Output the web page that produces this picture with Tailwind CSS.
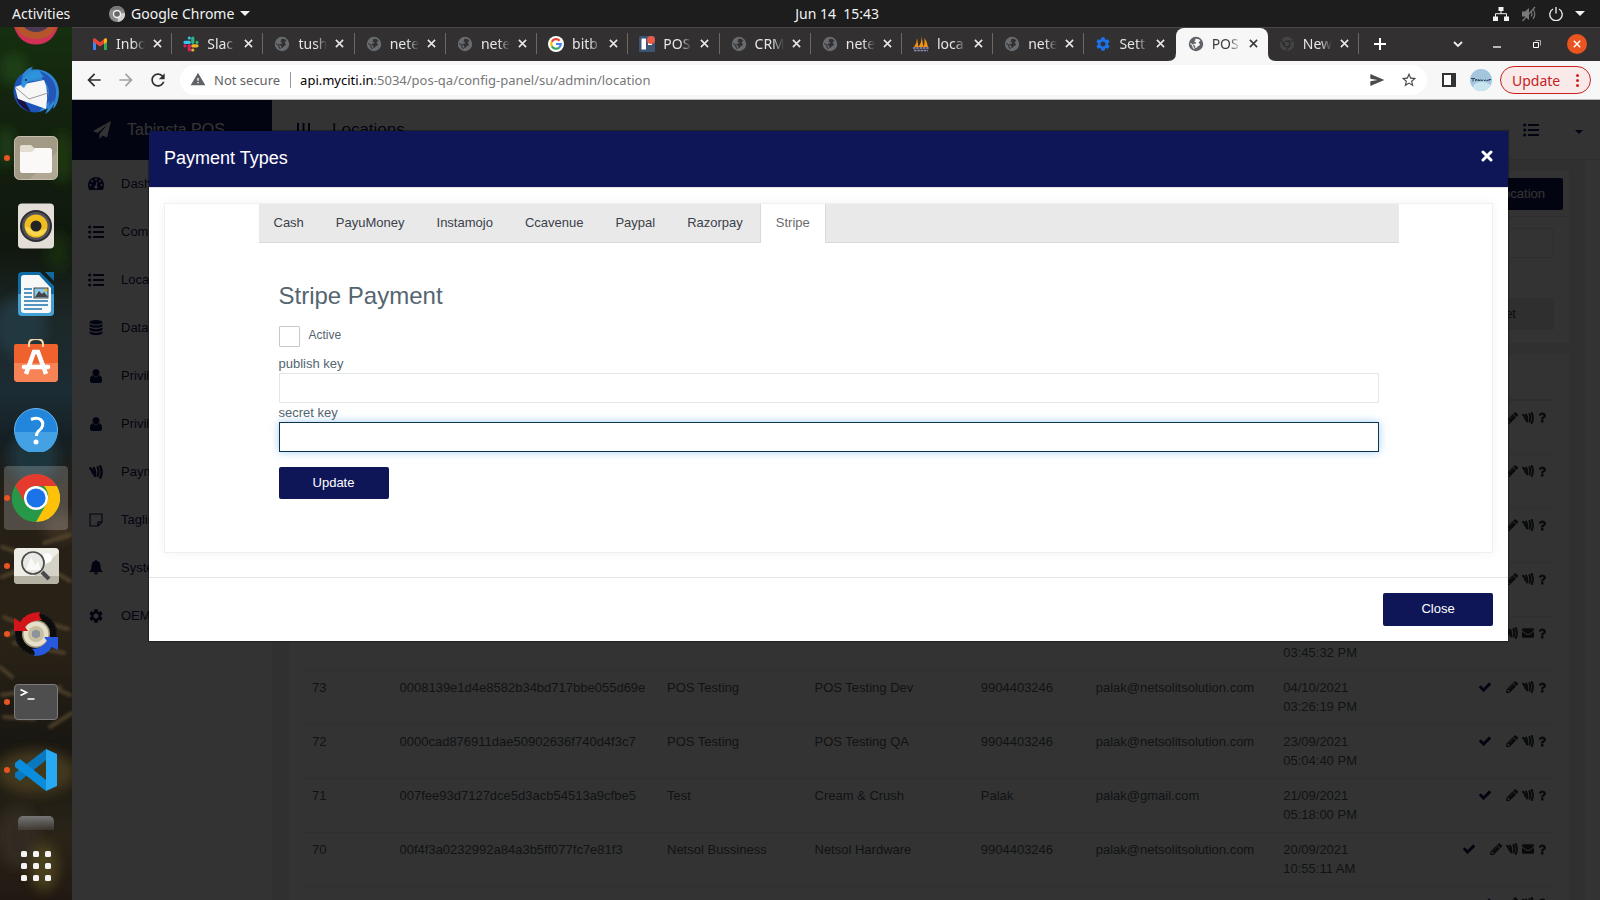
<!DOCTYPE html>
<html lang="en">
<head>
<meta charset="utf-8">
<meta name="viewport" content="width=device-width, initial-scale=1">
<title>Payment Types - Tabinsta POS</title>
<script src="https://cdn.jsdelivr.net/npm/@tailwindcss/browser@4"></script>
</head>
<body class="flex h-screen flex-col overflow-hidden bg-[#1d1d1d] font-['Liberation_Sans',Arial,sans-serif] text-[13px]">

<!-- Icon definitions -->
<svg class="hidden" aria-hidden="true">
  <symbol id="x" viewBox="0 0 10 10"><path d="M1 1l8 8M9 1l-8 8" fill="none" stroke="currentColor" stroke-width="1.8"/></symbol>
  <symbol id="globe" viewBox="0 0 16 16"><circle cx="8" cy="8" r="7.2" fill="currentColor"/><path d="M7 3c2-.8 4.500 0 5.500 2-1 .5-2 .8-1.800 1.800.2.700 1.300.500 1.200 1.600-.1 1.200-1.600 1.200-2.300 2.200-.6.9-1.100 1.800-2 1.400-.8-.4-.1-1.400-.4-2.100-.4-.9-1.900-.4-2-1.400 0-.9 1.300-.7 2-.8.9-.1 1.200-.6.8-1.200-.4-.6-1.500-.2-1.500-1.100 0-.8 1-.7 1.100-1.300z" class="fill-[#323031]"/><path d="M2.200 7.500q2.300.7 2.600 2.600t1.700 2.700" fill="none" class="stroke-[#323031]" stroke-width="1.200"/></symbol>
  <symbol id="list" viewBox="0 0 16 14"><g fill="currentColor"><circle cx="1.700" cy="2" r="1.600"/><circle cx="1.700" cy="7" r="1.600"/><circle cx="1.700" cy="12" r="1.600"/><path d="M5 .9h11v2.200H5zM5 5.900h11v2.200H5zM5 10.900h11v2.200H5z"/></g></symbol>
  <symbol id="user" viewBox="0 0 14 14"><g fill="currentColor"><circle cx="7" cy="3.700" r="3.500"/><path d="M3.500 6.200C1.500 6.800.8 9 .9 11.700c0 1.400.9 2.200 2.100 2.200h8c1.200 0 2.100-.8 2.100-2.200.1-2.700-.6-4.900-2.600-5.500-1.800 1.900-5.200 1.900-7 0z"/></g></symbol>
  <symbol id="wave" viewBox="0 0 14 14"><g fill="none" stroke="currentColor" stroke-linecap="round"><path d="M1.300 3.300c1.500.8 1.800 2.200 3 5.200" stroke-width="2.600"/><path d="M4.800 3c1.400 2.500 1.800 4.800 1 8" stroke-width="2.400"/><path d="M8.600 2.200c1.200 2.600 1.200 6 0 9" stroke-width="2.200"/><path d="M11.300 1.200c1.700 3.600 1.700 8 0 11.600" stroke-width="2.400"/></g></symbol>
  <symbol id="check" viewBox="0 0 1792 1792"><path fill="currentColor" d="M1671 566q0 40-28 68l-724 724-136 136q-28 28-68 28t-68-28l-136-136-362-362q-28-28-28-68t28-68l136-136q28-28 68-28t68 28l294 295 656-657q28-28 68-28t68 28l136 136q28 28 28 68z"/></symbol>
  <symbol id="pencil" viewBox="100 128 1536 1536"><path fill="currentColor" d="M491 1536l91-91-235-235-91 91v107h128v128h107zm523-928q0-22-22-22-10 0-17 7l-542 542q-7 7-7 17 0 22 22 22 10 0 17-7l542-542q7-7 7-17zm-54-192l416 416-832 832h-416v-416zm683 96q0 53-37 90l-166 166-416-416 166-165q36-38 90-38 53 0 91 38l235 234q37 39 37 91z"/></symbol>
  <symbol id="mail" viewBox="0 128 1792 1664"><path fill="currentColor" d="M1792 710v794q0 66-47 113t-113 47h-1472q-66 0-113-47t-47-113v-794q44 49 101 87 362 246 497 345 57 42 92.500 65.500t94.500 48 110 24.500h2q51 0 110-24.500t94.500-48 92.500-65.500q170-123 498-345 57-39 100-87zm0-294q0 79-49 151t-122 123q-376 261-468 325-10 7-42.500 31t-54 38.500-52 32.500-57.500 27-50 9h-2q-23 0-50-9t-57.500-27-52-32.500-54-38.500-42.500-31q-91-64-262-182.500t-205-142.500q-62-42-117-115.500t-55-136.500q0-78 41.500-130t118.500-52h1472q65 0 112.500 47t47.500 113z"/></symbol>
  <symbol id="help" viewBox="384 256 1024 1280"><path fill="currentColor" d="M1088 1256v240q0 16-12 28t-28 12h-240q-16 0-28-12t-12-28v-240q0-16 12-28t28-12h240q16 0 28 12t12 28zm316-600q0 54-15.500 101t-35 76.500-55 59.500-57.500 43.500-61 35.500q-41 23-68.500 65t-27.500 67q0 17-12 32.500t-28 15.500h-240q-15 0-25.500-18.500t-10.500-37.500v-45q0-83 65-156.500t143-108.500q59-27 84-56t25-76q0-42-46.500-74t-107.500-32q-65 0-108 29-35 25-107 115-13 16-31 16-12 0-25-8l-164-125q-13-10-15.500-25t5.500-28q160-266 464-266 80 0 161 31t146 83 106 127.500 41 158.500z"/></symbol>
  <symbol id="gear" viewBox="2 2 20 20"><path fill="currentColor" d="M19.140 12.940c.04-.3.060-.61.060-.94 0-.32-.02-.64-.07-.94l2.030-1.580c.18-.14.23-.41.120-.61l-1.920-3.320c-.12-.22-.37-.29-.59-.22l-2.390.96c-.5-.38-1.030-.7-1.620-.94l-.36-2.540c-.04-.24-.24-.41-.48-.41h-3.840c-.24 0-.43.17-.47.41l-.36 2.540c-.59.24-1.130.57-1.620.94l-2.390-.96c-.22-.08-.47 0-.59.22L2.740 8.870c-.12.21-.08.47.12.61l2.030 1.580c-.05.3-.09.63-.09.94s.02.64.07.94l-2.030 1.580c-.18.14-.23.41-.12.61l1.920 3.320c.12.22.37.29.59.22l2.390-.96c.5.38 1.030.7 1.620.94l.36 2.540c.05.24.24.41.48.41h3.840c.24 0 .44-.17.47-.41l.36-2.540c.59-.24 1.130-.56 1.620-.94l2.390.96c.22.08.47 0 .59-.22l1.920-3.320c.12-.22.07-.47-.12-.61l-2.010-1.580zM12 15.600c-1.980 0-3.600-1.620-3.600-3.600s1.620-3.600 3.600-3.600 3.600 1.620 3.600 3.600-1.620 3.600-3.600 3.600z"/></symbol>
</svg>

<!-- System panel -->
<header class="flex h-[27px] shrink-0 items-center bg-[#1d1d1d] font-['Noto_Sans',sans-serif] text-[14px] leading-5 text-[#f2f2f2]">
  <div class="flex w-[49.7%] items-center pl-3">
    <button class="w-[97px] text-left">Activities</button>
    <button class="flex items-center gap-[6px]">
      <svg class="size-4" viewBox="0 0 16 16"><circle cx="8" cy="8" r="8" fill="#8a8a8a"/><path d="M8 8l8-1a8 8 0 0 1-7 9z" fill="#d0d0d0"/><path d="M1 4a8 8 0 0 1 14 0H8z" fill="#777"/><circle cx="8" cy="8" r="4.200" fill="#f0f0f0"/><circle cx="8" cy="8" r="2.800" fill="#666"/></svg>
      <span>Google Chrome</span>
      <svg class="h-[5px] w-[10px]" viewBox="0 0 10 5"><path d="M0 0h10L5 5z" fill="#f2f2f2"/></svg>
    </button>
  </div>
  <time class="whitespace-pre">Jun 14  15:43</time>
  <div class="ml-auto flex items-center gap-3 pr-[15px]">
    <svg class="h-[14px] w-4" viewBox="0 0 16 14"><path d="M5.500 0h5v4h-5zM0 9.500h5V14H0zM11 9.500h5V14h-5z" fill="#f2f2f2"/><path d="M8 4v2.700M2.500 10V6.700h11V10" fill="none" stroke="#f2f2f2"/></svg>
    <svg class="size-4" viewBox="0 0 16 16"><path d="M1 5.500h3L8 2v12l-4-3.500H1z" fill="#7a7a7a"/><path d="M10 5.500q2 2.500 0 5M12 3q3.500 5 0 10M1.500 15L14 1" fill="none" stroke="#7a7a7a" stroke-width="1.200"/></svg>
    <svg class="size-[14px]" viewBox="0 0 14 14"><path d="M4 2a6.200 6.200 0 1 0 6 0M7 0v6.500" fill="none" stroke="#f2f2f2" stroke-width="1.300"/></svg>
    <svg class="h-[5px] w-[10px]" viewBox="0 0 10 5"><path d="M0 0h10L5 5z" fill="#f2f2f2"/></svg>
  </div>
</header>

<div class="flex min-h-0 flex-1">

  <!-- Dock -->
  <nav aria-label="Dock" class="relative flex w-[72px] shrink-0 flex-col overflow-hidden bg-[#151510]">
    <svg class="absolute inset-0 size-full" viewBox="0 0 72 873" preserveAspectRatio="none" aria-hidden="true">
      <defs>
        <linearGradient id="dk" x2="0" y2="1"><stop offset="0" stop-color="#16300f"/><stop offset=".08" stop-color="#14240f"/><stop offset=".25" stop-color="#10170e"/><stop offset=".34" stop-color="#1d2829"/><stop offset=".42" stop-color="#1c2c34"/><stop offset=".47" stop-color="#152024"/><stop offset=".53" stop-color="#241e16"/><stop offset=".7" stop-color="#2a2216"/><stop offset=".82" stop-color="#191712"/><stop offset=".93" stop-color="#2a2418"/><stop offset="1" stop-color="#211812"/></linearGradient>
        <filter id="bl" x="-50%" y="-50%" width="200%" height="200%"><feGaussianBlur stdDeviation="6"/></filter>
        <filter id="bs"><feGaussianBlur stdDeviation="1.500"/></filter>
      </defs>
      <rect width="72" height="873" fill="url(#dk)"/>
      <g filter="url(#bl)"><ellipse cx="14" cy="42" rx="14" ry="16" fill="#1d4012"/><ellipse cx="62" cy="130" rx="12" ry="26" fill="#1b3410"/><ellipse cx="6" cy="120" rx="10" ry="20" fill="#1c3a12"/><ellipse cx="58" cy="225" rx="12" ry="20" fill="#17290f"/><ellipse cx="20" cy="300" rx="26" ry="30" fill="#233740"/><ellipse cx="34" cy="430" rx="24" ry="26" fill="#1e343c"/><ellipse cx="60" cy="500" rx="16" ry="14" fill="#3d3022"/><ellipse cx="36" cy="745" rx="40" ry="22" fill="#43371e"/><ellipse cx="18" cy="810" rx="20" ry="30" fill="#332c20"/><ellipse cx="44" cy="840" rx="14" ry="24" fill="#4a3f1e"/></g>
      <g filter="url(#bs)" fill="none" stroke="#5e4e33" stroke-width="4" stroke-linecap="round" opacity=".7"><path d="M2 520l18 6M44 516l26-8M2 550l30-12M50 542l20 12M4 590l22 10M40 594l28 8M8 608l24-12M0 640l12 10M52 660l18 8M2 668l26-4M30 674l30-14M4 690l30 2M50 700l22-14M14 616l50 10"/></g>
    </svg>

    <div class="relative flex h-[29px] justify-center">
      <svg class="h-[18px] w-[44px]" viewBox="0 0 44 18"><path d="M0 0h44q-6 17.500-22 17.500T0 0z" fill="#d02f58"/><path d="M2 0h40q-5 12-20 12T2 0z" fill="#b4552c"/><path d="M10 0h24q-5 5-12 5T10 0z" fill="#4c3a55"/></svg>
    </div>
    <a href="#" aria-label="Thunderbird" class="relative flex h-[68px] items-center justify-center">
      <svg class="size-[48px]" viewBox="0 0 48 48"><circle cx="23" cy="25" r="21.500" fill="#1c54b8"/><path d="M11 8Q16 1 21 1l-2 3C34 1 48 12 47 28q-1 11-6 15l1-5q-3 7-9 10l3-6-9 4 8-10Q38 22 30 14L9 17z" fill="#2f86d2"/><path d="M30 13q12 10 3 26l5-4-1 5 5-6 0 4Q50 14 28 5z" fill="#2456b8"/><path d="M12 18l20-4q5 10 2 29L6 33 3 21z" fill="#f6f6f6"/><path d="M3 21l14 12 19-6" fill="none" stroke="#9a9a9a"/><path d="M4 32q4 10 15 14l-6-10z" fill="#1b1040"/><path d="M9 20Q12 5 27 5l5 6-15 3-5 8z" fill="#2c94dd"/><circle cx="14" cy="14" r="1" fill="#123"/></svg>
    </a>
    <a href="#" aria-label="Files" class="relative flex h-[68px] items-center justify-center">
      <span class="absolute left-1 size-[6px] rounded-full bg-[#e95420]"></span>
      <svg class="size-[44px]" viewBox="0 0 44 44"><rect x=".5" y=".5" width="43" height="43" rx="5" fill="#a39a86" stroke="#c5beae"/><path d="M43 16v22q0 5-5 5H16z" fill="#b0a894"/><rect x="6" y="12" width="32" height="25" rx="2.500" fill="#faf9f8"/><path d="M6 16V11q0-2 2-2h9l4 4-3 3z" fill="#e2dfd2"/></svg>
    </a>
    <a href="#" aria-label="Rhythmbox" class="relative flex h-[68px] items-center justify-center">
      <svg class="h-[46px] w-[36px]" viewBox="0 0 36 46"><rect width="36" height="45" y="0.500" rx="4" fill="#e4dfd6"/><circle cx="18" cy="23" r="16" fill="#2d2d33"/><circle cx="18" cy="23" r="14" fill="#52525a"/><circle cx="18" cy="23" r="11.500" fill="#f0bd1f"/><path d="M7 23a11.500 11.500 0 0 0 22 3q-11 4-22-3z" fill="#f8d84e"/><circle cx="18" cy="23" r="5.500" fill="#242424"/></svg>
    </a>
    <a href="#" aria-label="LibreOffice Writer" class="relative flex h-[68px] items-center justify-center">
      <svg class="h-[44px] w-[36px]" viewBox="0 0 36 44"><path d="M4 0h18l14 14v26q0 4-4 4H4q-4 0-4-4V4q0-4 4-4z" fill="#0f6ca6"/><path d="M0 22h36v18q0 4-4 4H4q-4 0-4-4z" fill="#43a0d3"/><path d="M27 0h9v9z" fill="#11699f"/><path d="M6 3h15l12 13v22q0 3-3 3H6q-3 0-3-3V6q0-3 3-3z" fill="#f8f8f8"/><path d="M6 17h8M6 21h8M6 25h8M6 29h24M6 33h24M6 37h18" stroke="#1a74ad" stroke-width="1.700"/><rect x="16" y="16" width="14" height="10" fill="#8cc9e8" stroke="#222" stroke-width=".8"/><path d="M17 25l4-6 3 3 2-2 4 5z" fill="#444"/><circle cx="28" cy="18" r="1.500" fill="#f0b400"/></svg>
    </a>
    <a href="#" aria-label="Ubuntu Software" class="relative flex h-[68px] items-center justify-center">
      <svg class="h-[46px] w-[44px]" viewBox="0 0 44 46"><path d="M0 7q0-2 2-2h40q2 0 2 2v32q0 4-4 4H4q-4 0-4-4z" fill="#f0622d"/><path d="M0 24h44v15q0 4-4 4H4q-4 0-4-4z" fill="#f58355"/><path d="M15 8V5q0-5 7-5t7 5v3" fill="none" stroke="#f6d6a8" stroke-width="2"/><path d="M12 35l8-22h4l8 22" fill="none" stroke="#fff" stroke-width="4.500"/><path d="M10 28h24" stroke="#fff" stroke-width="4.500" stroke-linecap="round"/></svg>
    </a>
    <a href="#" aria-label="Help" class="relative flex h-[68px] items-center justify-center">
      <svg class="size-[44px]" viewBox="0 0 44 44"><circle cx="22" cy="22" r="21.500" fill="#2286dc" stroke="#6ab5ec"/><path d="M.5 24h43a21.500 21.500 0 0 1-43 0z" fill="#44a2e4"/><path d="M17 11.500q6-2.500 9.500 0 4 3.500 1 8.500-1 1.500-3.500 3.500-1.500 1.500-1.500 4.500" fill="none" stroke="#fff" stroke-width="3"/><circle cx="22" cy="34" r="2.500" fill="#fff"/></svg>
    </a>
    <a href="#" aria-label="Google Chrome" class="relative flex h-[68px] items-center justify-center">
      <span class="absolute inset-x-1 inset-y-[2px] rounded-[4px] bg-white/20"></span>
      <span class="absolute left-1 size-[6px] rounded-full bg-[#e95420]"></span>
      <svg class="relative size-[48px]" viewBox="0 0 48 48"><circle cx="24" cy="24" r="24" fill="#279847"/><path d="M3.200 12A24 24 0 0 1 44.800 12H24a12 12 0 0 0-10.400 18z" fill="#e53a2e"/><path d="M3.200 12l10.400 18L24 36 34.400 30 24 48A24 24 0 0 1 3.200 12z" fill="#279847"/><path d="M44.800 12A24 24 0 0 1 24 48l10.400-18Q39 20 32 12z" fill="#fdc10a"/><circle cx="24" cy="24" r="12" fill="#fff"/><circle cx="24" cy="24" r="9.600" fill="#1a73e8"/></svg>
    </a>
    <a href="#" aria-label="Image Viewer" class="relative flex h-[68px] items-center justify-center">
      <span class="absolute left-1 size-[6px] rounded-full bg-[#e95420]"></span>
      <svg class="h-[36px] w-[45px]" viewBox="0 0 45 36"><rect width="45" height="36" rx="4" fill="#eeede6"/><path d="M20 28L45 4v24z" fill="#d4d1c6"/><path d="M0 28h45v4q0 4-4 4H4q-4 0-4-4z" fill="#b5b1a3"/><circle cx="33" cy="10" r="5" fill="#fff"/><circle cx="19" cy="15" r="11" fill="#e8e8e4" stroke="#4c4c4c" stroke-width="1.700"/><path d="M12 22l5-13 4 8 3-4 3 9z" fill="#f9f9f6"/><path d="M28 24l7 7" stroke="#4a4a4a" stroke-width="4"/></svg>
    </a>
    <a href="#" aria-label="Sync" class="relative flex h-[68px] items-center justify-center">
      <span class="absolute left-1 size-[6px] rounded-full bg-[#e95420]"></span>
      <svg class="size-[46px]" viewBox="0 0 46 46"><circle cx="23" cy="23" r="21" fill="#0c0c0c" stroke="#222" stroke-width="2" stroke-dasharray="2 2"/><circle cx="23" cy="23" r="14" fill="#9d937a"/><circle cx="23" cy="23" r="12.500" fill="#e6dfc9"/><circle cx="23" cy="23" r="8" fill="#c8bea0"/><path d="M23 18.500l4 2v5l-4 2-4-2v-5z" fill="#8b949c"/><path d="M27 1Q13 1 7 11L1 7v13h14l-3-4Q17 9 29 9q-4-4-2-8z" fill="#d3141b"/><path d="M21 45q13 0 18-9l6 3V26H31l3 4q-4 7-15 8 4 3 2 7z" fill="#2659de"/></svg>
    </a>
    <a href="#" aria-label="Terminal" class="relative flex h-[68px] items-center justify-center">
      <span class="absolute left-1 size-[6px] rounded-full bg-[#e95420]"></span>
      <svg class="h-[36px] w-[44px]" viewBox="0 0 44 36"><rect x=".5" y=".5" width="43" height="35" rx="3.500" fill="#4e4e4e" stroke="#7c7c7c"/><path d="M6.500 5.500l6 3-6 3" fill="none" stroke="#fff" stroke-width="1.700"/><path d="M13.500 15h7" stroke="#fff" stroke-width="1.500"/></svg>
    </a>
    <a href="#" aria-label="Visual Studio Code" class="relative flex h-[68px] items-center justify-center">
      <span class="absolute left-1 size-[6px] rounded-full bg-[#e95420]"></span>
      <svg class="size-[42px]" viewBox="0 0 42 42"><path d="M31 0v11L5 32 0 28v-4z" fill="#0a78be"/><path d="M31 42V31L5 10l-5 4v4z" fill="#0a8ddd"/><path d="M31 0l11 5v32l-11 5z" fill="#27a9f3"/></svg>
    </a>
    <div class="relative flex h-[26px] items-end justify-center">
      <span class="h-[14px] w-9 rounded-t-[5px] bg-gradient-to-b from-[#777] to-[#777]/20"></span>
    </div>
    <button aria-label="Show Applications" class="relative mx-auto mt-[21px]">
      <svg class="size-[30px]" viewBox="0 0 30 30"><g fill="#f4f4f4"><rect width="6" height="6" rx="1.500"/><rect x="12" width="6" height="6" rx="1.500"/><rect x="24" width="6" height="6" rx="1.500"/><rect y="12" width="6" height="6" rx="1.500"/><rect x="12" y="12" width="6" height="6" rx="1.500"/><rect x="24" y="12" width="6" height="6" rx="1.500"/><rect y="24" width="6" height="6" rx="1.500"/><rect x="12" y="24" width="6" height="6" rx="1.500"/><rect x="24" y="24" width="6" height="6" rx="1.500"/></g></svg>
    </button>
  </nav>

  <!-- Browser window -->
  <div class="flex min-w-0 flex-1 flex-col">

    <!-- Tab strip -->
    <div class="flex h-[34px] shrink-0 items-stretch border-t border-[#474546] bg-[#323031] pl-[9px] font-['Noto_Sans',sans-serif] text-[14px] leading-5 text-[#e6e6e6]">
      <div class="flex w-[1278px] items-stretch [&>div]:pb-[2px]">
        <div class="flex flex-1 items-center gap-2 pl-[11px]"><svg class="size-4 shrink-0" viewBox="0 0 16 16"><path d="M1 3.500h3V14H2q-1 0-1-1z" fill="#4285f4"/><path d="M12 3.500h3V13q0 1-1 1h-2z" fill="#34a853"/><path d="M1 4q0-2 2-1.700L8 6.300l5-4Q15 2 15 4v1.500l-7 5-7-5z" fill="#ea4335"/><path d="M12 3.200Q15 1 15 4v2l-3 2z" fill="#fbbc04"/></svg><span class="w-[29px] whitespace-nowrap [mask-image:linear-gradient(to_right,#000_60%,transparent)]">Inbo</span><button aria-label="Close tab" class="shrink-0"><svg class="size-[9px]"><use href="#x"/></svg></button><span class="ml-auto h-[21px] w-px bg-[#6a6869]"></span></div>
        <div class="flex flex-1 items-center gap-2 pl-[11px]"><svg class="size-4 shrink-0" viewBox="0 0 16 16"><g stroke-width="3.200" stroke-linecap="round"><path d="M6.300 2v0M2 6.300h4.300" stroke="#36c5f0"/><path d="M9.800 2v4.300M14 6.300v0" stroke="#2eb67d"/><path d="M9.800 9.800H14M9.800 14v0" stroke="#ecb22e"/><path d="M6.300 9.800V14M2 9.800v0" stroke="#e01e5a"/></g></svg><span class="w-[29px] whitespace-nowrap [mask-image:linear-gradient(to_right,#000_60%,transparent)]">Slac</span><button aria-label="Close tab" class="shrink-0"><svg class="size-[9px]"><use href="#x"/></svg></button><span class="ml-auto h-[21px] w-px bg-[#6a6869]"></span></div>
        <div class="flex flex-1 items-center gap-2 pl-[11px]"><svg class="size-4 shrink-0 text-[#686b70]"><use href="#globe"/></svg><span class="w-[29px] whitespace-nowrap [mask-image:linear-gradient(to_right,#000_60%,transparent)]">tush</span><button aria-label="Close tab" class="shrink-0"><svg class="size-[9px]"><use href="#x"/></svg></button><span class="ml-auto h-[21px] w-px bg-[#6a6869]"></span></div>
        <div class="flex flex-1 items-center gap-2 pl-[11px]"><svg class="size-4 shrink-0 text-[#686b70]"><use href="#globe"/></svg><span class="w-[29px] whitespace-nowrap [mask-image:linear-gradient(to_right,#000_60%,transparent)]">nete</span><button aria-label="Close tab" class="shrink-0"><svg class="size-[9px]"><use href="#x"/></svg></button><span class="ml-auto h-[21px] w-px bg-[#6a6869]"></span></div>
        <div class="flex flex-1 items-center gap-2 pl-[11px]"><svg class="size-4 shrink-0 text-[#686b70]"><use href="#globe"/></svg><span class="w-[29px] whitespace-nowrap [mask-image:linear-gradient(to_right,#000_60%,transparent)]">nete</span><button aria-label="Close tab" class="shrink-0"><svg class="size-[9px]"><use href="#x"/></svg></button><span class="ml-auto h-[21px] w-px bg-[#6a6869]"></span></div>
        <div class="flex flex-1 items-center gap-2 pl-[11px]"><svg class="size-4 shrink-0" viewBox="0 0 16 16"><circle cx="8" cy="8" r="8" fill="#fff"/><g fill="none" stroke-width="2.200"><path d="M11.600 4.700A4.800 4.800 0 0 0 3.800 5.700" stroke="#ea4335"/><path d="M3.800 5.700a4.800 4.800 0 0 0 0 4.600" stroke="#fbbc04"/><path d="M3.800 10.300a4.800 4.800 0 0 0 7.300 1.300" stroke="#34a853"/><path d="M11.100 11.600A4.800 4.800 0 0 0 12.800 8H8" stroke="#4285f4"/></g></svg><span class="w-[29px] whitespace-nowrap [mask-image:linear-gradient(to_right,#000_60%,transparent)]">bitb</span><button aria-label="Close tab" class="shrink-0"><svg class="size-[9px]"><use href="#x"/></svg></button><span class="ml-auto h-[21px] w-px bg-[#6a6869]"></span></div>
        <div class="flex flex-1 items-center gap-2 pl-[11px]"><svg class="size-4 shrink-0" viewBox="0 0 16 16"><rect width="16" height="16" rx="1.500" fill="#3b5575"/><rect x="2.500" y="2.500" width="4.500" height="11" rx=".5" fill="#fff"/><rect x="9" y="4" width="4" height="5" fill="#fff"/><circle cx="12" cy="4" r="4" fill="#eb5a46"/></svg><span class="w-[29px] whitespace-nowrap [mask-image:linear-gradient(to_right,#000_60%,transparent)]">POS</span><button aria-label="Close tab" class="shrink-0"><svg class="size-[9px]"><use href="#x"/></svg></button><span class="ml-auto h-[21px] w-px bg-[#6a6869]"></span></div>
        <div class="flex flex-1 items-center gap-2 pl-[11px]"><svg class="size-4 shrink-0 text-[#686b70]"><use href="#globe"/></svg><span class="w-[29px] whitespace-nowrap [mask-image:linear-gradient(to_right,#000_60%,transparent)]">CRM</span><button aria-label="Close tab" class="shrink-0"><svg class="size-[9px]"><use href="#x"/></svg></button><span class="ml-auto h-[21px] w-px bg-[#6a6869]"></span></div>
        <div class="flex flex-1 items-center gap-2 pl-[11px]"><svg class="size-4 shrink-0 text-[#686b70]"><use href="#globe"/></svg><span class="w-[29px] whitespace-nowrap [mask-image:linear-gradient(to_right,#000_60%,transparent)]">nete</span><button aria-label="Close tab" class="shrink-0"><svg class="size-[9px]"><use href="#x"/></svg></button><span class="ml-auto h-[21px] w-px bg-[#6a6869]"></span></div>
        <div class="flex flex-1 items-center gap-2 pl-[11px]"><svg class="size-4 shrink-0" viewBox="0 0 16 16"><path d="M1 11Q4 7 4 2l1.500 9zM5.500 11Q9 6 8.500 0l2 11zM10.500 11q1.500-4 1-9 3 4 3.500 9z" fill="#f29111"/><path d="M0 12h16M1 14.500h14" stroke="#8c8fc0" stroke-width="1.600" stroke-dasharray="2.500 .8"/></svg><span class="w-[29px] whitespace-nowrap [mask-image:linear-gradient(to_right,#000_60%,transparent)]">loca</span><button aria-label="Close tab" class="shrink-0"><svg class="size-[9px]"><use href="#x"/></svg></button><span class="ml-auto h-[21px] w-px bg-[#6a6869]"></span></div>
        <div class="flex flex-1 items-center gap-2 pl-[11px]"><svg class="size-4 shrink-0 text-[#686b70]"><use href="#globe"/></svg><span class="w-[29px] whitespace-nowrap [mask-image:linear-gradient(to_right,#000_60%,transparent)]">nete</span><button aria-label="Close tab" class="shrink-0"><svg class="size-[9px]"><use href="#x"/></svg></button><span class="ml-auto h-[21px] w-px bg-[#6a6869]"></span></div>
        <div class="flex flex-1 items-center gap-2 pl-[11px]"><svg class="size-4 shrink-0 p-px text-[#1a73e8]"><use href="#gear"/></svg><span class="w-[29px] whitespace-nowrap [mask-image:linear-gradient(to_right,#000_60%,transparent)]">Sett</span><button aria-label="Close tab" class="shrink-0"><svg class="size-[9px]"><use href="#x"/></svg></button></div>
        <div class="relative flex flex-1 items-center gap-2 rounded-t-lg bg-[#f7f7f7] pl-3 text-[#3c3c3c]"><svg class="absolute bottom-0 right-full size-2" viewBox="0 0 8 8"><path d="M8 0v8H0q8 0 8-8z" fill="#f7f7f7"/></svg><svg class="absolute bottom-0 left-full size-2" viewBox="0 0 8 8"><path d="M0 0v8h8Q0 8 0 0z" fill="#f7f7f7"/></svg><svg class="size-4 shrink-0" viewBox="0 0 16 16"><circle cx="8" cy="8" r="7.200" fill="#5f6368"/><path d="M7 3c2-.8 4.500 0 5.500 2-1 .5-2 .8-1.800 1.800.2.700 1.300.500 1.200 1.600-.1 1.200-1.600 1.200-2.300 2.200-.6.9-1.100 1.800-2 1.400-.8-.4-.1-1.400-.4-2.100-.4-.9-1.900-.4-2-1.400 0-.9 1.300-.7 2-.8.9-.1 1.200-.6.8-1.200-.4-.6-1.500-.2-1.500-1.100 0-.8 1-.7 1.100-1.300z" fill="#f7f7f7"/><path d="M2.200 7.500q2.300.7 2.600 2.600t1.700 2.700" fill="none" stroke="#f7f7f7" stroke-width="1.200"/></svg><span class="w-[29px] whitespace-nowrap [mask-image:linear-gradient(to_right,#000_60%,transparent)]">POS</span><button aria-label="Close tab" class="shrink-0"><svg class="size-[9px]"><use href="#x"/></svg></button></div>
        <div class="flex flex-1 items-center gap-2 pl-[11px]"><svg class="size-4 shrink-0" viewBox="0 0 16 16"><circle cx="8" cy="8" r="7.200" fill="#434445"/><circle cx="8" cy="8" r="3" fill="#434445" stroke="#2b2a2b" stroke-width="1.200"/><path d="M8 5h7M5.400 9.500L2 4M10.600 9.500L7 15" stroke="#2b2a2b" stroke-width="1.200"/></svg><span class="w-[29px] whitespace-nowrap [mask-image:linear-gradient(to_right,#000_60%,transparent)]">New</span><button aria-label="Close tab" class="shrink-0"><svg class="size-[9px]"><use href="#x"/></svg></button><span class="ml-auto h-[21px] w-px bg-[#6a6869]"></span></div>
      </div>
      <button aria-label="New tab" class="ml-[15px] pb-px text-white"><svg class="size-3" viewBox="0 0 12 12"><path d="M6 0v12M0 6h12" stroke="currentColor" stroke-width="2"/></svg></button>
      <div class="ml-auto flex items-center pb-px pr-[13px]">
        <button aria-label="Search tabs" class="mr-[30px]"><svg class="h-[7px] w-[10px]" viewBox="0 0 10 7"><path d="M1 1l4 4 4-4" fill="none" stroke="#eee" stroke-width="1.800"/></svg></button>
        <button aria-label="Minimize" class="mr-[32px]"><svg class="size-2" viewBox="0 0 8 8"><path d="M0 7h8" stroke="#fff" stroke-width="1.300"/></svg></button>
        <button aria-label="Restore" class="mr-[26px]"><svg class="size-2" viewBox="0 0 8 8"><path d="M.500 2.500h5v5h-5z" fill="none" stroke="#fff"/><path d="M2.500.500h5v5" fill="none" stroke="#aaa"/></svg></button>
        <button aria-label="Close" class="flex size-5 items-center justify-center rounded-full bg-[#e95420] text-white"><svg class="size-2"><use href="#x"/></svg></button>
      </div>
    </div>

    <!-- Toolbar -->
    <div class="flex h-[39px] shrink-0 items-center border-b border-[#b5babd] bg-[#f7f7f7] pl-3 pr-[9px] font-['Noto_Sans',sans-serif] text-[14px] text-[#5f6368]">
      <div class="flex gap-3 pr-3">
        <button aria-label="Back"><svg class="size-5" viewBox="0 0 24 24"><path fill="#2f2f2f" d="M20 11H7.830l5.590-5.590L12 4l-8 8 8 8 1.410-1.410L7.830 13H20v-2z"/></svg></button>
        <button aria-label="Forward"><svg class="size-5" viewBox="0 0 24 24"><path fill="#a3a3a3" d="M12 4l-1.410 1.410L16.170 11H4v2h12.170l-5.580 5.590L12 20l8-8z"/></svg></button>
        <button aria-label="Reload"><svg class="size-5" viewBox="0 0 24 24"><path fill="#2f2f2f" d="M17.650 6.350C16.200 4.900 14.210 4 12 4c-4.420 0-7.990 3.580-7.990 8s3.570 8 7.990 8c3.730 0 6.840-2.550 7.730-6h-2.080c-.82 2.330-3.040 4-5.650 4-3.310 0-6-2.690-6-6s2.690-6 6-6c1.660 0 3.140.69 4.220 1.780L13 11h7V4l-2.350 2.350z"/></svg></button>
      </div>
      <div class="flex h-[30px] min-w-0 flex-1 items-center rounded-full bg-white pl-[10px] pr-[10px] leading-5">
        <svg class="size-4 shrink-0" viewBox="0 1 24 24"><path fill="#5f6368" d="M1 21h22L12 2 1 21zm12-3h-2v-2h2v2zm0-4h-2v-4h2v4z"/></svg>
        <span class="ml-2 text-[13px]">Not secure</span>
        <span class="ml-[10px] mr-[9px] h-4 w-px bg-[#999]"></span>
        <span class="flex-1 text-[13px] text-[#777]"><span class="text-black">api.myciti.in</span>:5034/pos-qa/config-panel/su/admin/location</span>
        <button aria-label="Share"><svg class="size-4" viewBox="0 0 24 24"><path fill="#4a4a4a" d="M2 21L23 12 2 3v7l11 2-11 2z"/></svg></button>
        <button aria-label="Bookmark" class="ml-4"><svg class="size-4" viewBox="1 1 22 22"><path fill="#4a4a4a" d="M22 9.240l-7.190-.62L12 2 9.190 8.630 2 9.240l5.460 4.730L5.820 21 12 17.270 18.180 21l-1.630-7.030L22 9.240zM12 15.400l-3.760 2.270 1-4.280-3.320-2.880 4.380-.38L12 6.100l1.710 4.040 4.380.38-3.320 2.880 1 4.280L12 15.400z"/></svg></button>
      </div>
      <button aria-label="Side panel" class="ml-[15px]"><svg class="size-[14px]" viewBox="0 0 14 14"><rect width="14" height="14" fill="#333"/><rect x="2" y="2" width="7" height="10" fill="#fff"/></svg></button>
      <button aria-label="Profile" class="ml-[14px]"><svg class="size-[22px]" viewBox="0 0 22 22"><defs><clipPath id="av"><circle cx="11" cy="11" r="11"/></clipPath></defs><g clip-path="url(#av)"><rect width="22" height="22" fill="#a3c6de"/><ellipse cx="12" cy="18" rx="9" ry="5" fill="#c9e6ef"/><path d="M1 9.500h4M3 9.500v3M5.500 12v-1.500h1.500V12M8.500 12v-1.500l1.500 1.500v-1.500M11 10.500l1 1.500 1-1.500M14 11.500h1.500v-1M16.500 11.500H18v-1M19 12v-1.500h2" fill="none" stroke="#344a58"/></g></svg></button>
      <button class="ml-2 flex h-7 w-[91px] items-center justify-between rounded-full border border-[#c5221f] bg-[#f9eae9] pl-[11px] pr-[11px] text-[#c5221f]">Update<svg class="h-[13px] w-[3px]" viewBox="0 0 3 13"><g fill="#d02020"><circle cx="1.500" cy="1.500" r="1.500"/><circle cx="1.500" cy="6.500" r="1.500"/><circle cx="1.500" cy="11.500" r="1.500"/></g></svg></button>
    </div>

    <!-- Page -->
    <div class="relative flex min-h-0 flex-1 overflow-hidden bg-white">

      <!-- Sidebar -->
      <aside class="w-[200px] shrink-0 text-[#0f1658]">
        <div class="flex h-[60px] items-center gap-4 bg-[#0f1658] pl-[21px] text-[16px] text-white">
          <svg class="size-[18px]" viewBox="0 0 18 18"><path d="M18 0L0 10l4.500 2L15 3 6.500 13v5l3-3.500 4.500 2z" fill="currentColor"/></svg>
          <span>Tabinsta POS</span>
        </div>
        <ul class="[&_a]:pb-px">
          <li><a href="#" class="flex h-12 items-center gap-[17px] pl-4"><svg class="h-[13px] w-4" viewBox="0 0 16 13"><path d="M8 0a8 8 0 0 0-8 8q0 3 1.200 5h13.600Q16 11 16 8a8 8 0 0 0-8-8z" fill="currentColor"/><g fill="#fff"><circle cx="2.500" cy="8" r="1"/><circle cx="4" cy="4" r="1"/><circle cx="8" cy="2.300" r="1"/><circle cx="12" cy="4" r="1"/><circle cx="13.500" cy="8" r="1"/><circle cx="8" cy="10" r="1.700"/><path d="M7.500 10L8.500 4.500l1 .2-1 5.500z"/></g></svg>Dashboard</a></li>
          <li><a href="#" class="flex h-12 items-center gap-[17px] pl-4"><svg class="h-[14px] w-4"><use href="#list"/></svg>Company</a></li>
          <li><a href="#" class="flex h-12 items-center gap-[17px] pl-4"><svg class="h-[14px] w-4"><use href="#list"/></svg>Location</a></li>
          <li><a href="#" class="flex h-12 items-center gap-[17px] pl-4"><svg class="h-[15px] w-4" viewBox="0 0 16 15"><g fill="currentColor"><ellipse cx="8" cy="2.200" rx="6.500" ry="2.200"/><path d="M1.500 4q6.500 3 13 0v1.800q-1 2-6.500 2t-6.500-2zM1.500 7.600q6.500 3 13 0v1.800q-1 2-6.500 2t-6.500-2zM1.500 11.200q6.500 3 13 0V13q-1 2-6.500 2t-6.500-2z"/></g></svg>Database</a></li>
          <li><a href="#" class="flex h-12 items-center gap-[17px] pl-4"><svg class="h-[14px] w-4"><use href="#user"/></svg>Privileges</a></li>
          <li><a href="#" class="flex h-12 items-center gap-[17px] pl-4"><svg class="h-[14px] w-4"><use href="#user"/></svg>Privileges</a></li>
          <li><a href="#" class="flex h-12 items-center gap-[17px] pl-4"><svg class="h-[14px] w-4"><use href="#wave"/></svg>Payment</a></li>
          <li><a href="#" class="flex h-12 items-center gap-[17px] pl-4"><svg class="h-[14px] w-4" viewBox="0 0 14 14"><path d="M1 1h12v8l-4 4H1zM13 9H9v4" fill="none" stroke="currentColor" stroke-width="1.200"/></svg>Taglines</a></li>
          <li><a href="#" class="flex h-12 items-center gap-[17px] pl-4"><svg class="h-[15px] w-4" viewBox="0 0 14 15"><path d="M7 0q1 0 1 1 3.500.8 3.500 5 0 4 2.500 6H0q2.500-2 2.500-6Q2.500 1.800 6 1q0-1 1-1zM5 12.500h4q0 2-2 2t-2-2z" fill="currentColor"/></svg>System</a></li>
          <li><a href="#" class="flex h-12 items-center gap-[17px] pl-4"><svg class="h-[14px] w-4"><use href="#gear"/></svg>OEM</a></li>
        </ul>
      </aside>

      <!-- Main column -->
      <div class="flex min-w-0 flex-1 flex-col">
        <div class="flex h-[60px] shrink-0 items-center border-b border-[#e6e6e6] pl-[25px] pr-[17px] text-[#0f1658]">
          <svg class="h-[14px] w-[13px]" viewBox="0 0 13 14"><path d="M0 0h2v14H0zM5.500 0h2v14h-2zM11 0h2v14h-2z" fill="currentColor"/></svg>
          <h1 class="ml-[22px] text-[17px]">Locations</h1>
          <svg class="ml-auto h-[14px] w-4"><use href="#list"/></svg>
          <svg class="ml-9 mt-1 h-1 w-2" viewBox="0 0 8 4"><path d="M0 0h8L4 4z" fill="currentColor"/></svg>
        </div>
        <main class="mr-[15px] flex-1 bg-[#f0f0f0] pl-[17px] pr-4 pt-[11px] text-[#535f68]">
          <section class="h-[172px] bg-white">
            <div class="flex h-[46px] items-center justify-end border-b border-[#e4e7ea] pr-[6px]">
              <button class="h-8 rounded-[2px] bg-[#0f1658] px-[18px] text-white">Add Location</button>
            </div>
            <div class="flex flex-col items-end px-[15px] pt-[11px]">
              <input aria-label="Search locations" type="text" class="h-[30px] w-full border border-[#e4e7ea]">
              <button class="mt-10 h-8 w-[110px] bg-[#ececec] text-[#3c434a]">Reset</button>
            </div>
          </section>
          <section class="mt-[11px] bg-white px-[15px] pt-[45px]">
            <table class="w-full table-fixed border-t-2 border-[#e4e7ea] leading-[19px]">
              <colgroup><col class="w-[7%]"><col class="w-[21.4%]"><col class="w-[11.8%]"><col class="w-[13.3%]"><col class="w-[9.2%]"><col class="w-[15%]"><col></colgroup>
              <tbody class="[&_td]:px-2 [&_td]:pt-[7px] [&_td]:align-top [&_tr]:h-[54px] [&_tr]:border-b [&_tr]:border-[#e9ebed]">
                <tr><td colspan="7"><div class="flex h-[19px] items-center justify-end gap-1 text-[#2d3338]"><svg class="mr-[10px] size-[14px] text-[#0f1658]"><use href="#check"/></svg><svg class="size-[12px]"><use href="#pencil"/></svg><svg class="size-3"><use href="#wave"/></svg><svg class="h-[11px] w-2"><use href="#help"/></svg></div></td></tr>
                <tr><td colspan="7"><div class="flex h-[19px] items-center justify-end gap-1 text-[#2d3338]"><svg class="mr-[10px] size-[14px] text-[#0f1658]"><use href="#check"/></svg><svg class="size-[12px]"><use href="#pencil"/></svg><svg class="size-3"><use href="#wave"/></svg><svg class="h-[11px] w-2"><use href="#help"/></svg></div></td></tr>
                <tr><td colspan="7"><div class="flex h-[19px] items-center justify-end gap-1 text-[#2d3338]"><svg class="mr-[10px] size-[14px] text-[#0f1658]"><use href="#check"/></svg><svg class="size-[12px]"><use href="#pencil"/></svg><svg class="size-3"><use href="#wave"/></svg><svg class="h-[11px] w-2"><use href="#help"/></svg></div></td></tr>
                <tr><td colspan="7"><div class="flex h-[19px] items-center justify-end gap-1 text-[#2d3338]"><svg class="mr-[10px] size-[14px] text-[#0f1658]"><use href="#check"/></svg><svg class="size-[12px]"><use href="#pencil"/></svg><svg class="size-3"><use href="#wave"/></svg><svg class="h-[11px] w-2"><use href="#help"/></svg></div></td></tr>
                <tr><td></td><td></td><td></td><td></td><td></td><td></td><td><div class="flex justify-between"><span><br>03:45:32 PM</span><div class="flex h-[19px] items-center gap-1 text-[#2d3338]"><svg class="mr-[10px] size-[14px] text-[#0f1658]"><use href="#check"/></svg><svg class="size-[12px]"><use href="#pencil"/></svg><svg class="size-3"><use href="#wave"/></svg><svg class="size-3"><use href="#mail"/></svg><svg class="h-[11px] w-2"><use href="#help"/></svg></div></div></td></tr>
                <tr><td>73</td><td>0008139e1d4e8582b34bd717bbe055d69e</td><td>POS Testing</td><td>POS Testing Dev</td><td>9904403246</td><td>palak@netsolitsolution.com</td><td><div class="flex justify-between"><span>04/10/2021<br>03:26:19 PM</span><div class="flex h-[19px] items-center gap-1 text-[#2d3338]"><svg class="mr-[10px] size-[14px] text-[#0f1658]"><use href="#check"/></svg><svg class="size-[12px]"><use href="#pencil"/></svg><svg class="size-3"><use href="#wave"/></svg><svg class="h-[11px] w-2"><use href="#help"/></svg></div></div></td></tr>
                <tr><td>72</td><td>0000cad876911dae50902636f740d4f3c7</td><td>POS Testing</td><td>POS Testing QA</td><td>9904403246</td><td>palak@netsolitsolution.com</td><td><div class="flex justify-between"><span>23/09/2021<br>05:04:40 PM</span><div class="flex h-[19px] items-center gap-1 text-[#2d3338]"><svg class="mr-[10px] size-[14px] text-[#0f1658]"><use href="#check"/></svg><svg class="size-[12px]"><use href="#pencil"/></svg><svg class="size-3"><use href="#wave"/></svg><svg class="h-[11px] w-2"><use href="#help"/></svg></div></div></td></tr>
                <tr><td>71</td><td>007fee93d7127dce5d3acb54513a9cfbe5</td><td>Test</td><td>Cream &amp; Crush</td><td>Palak</td><td>palak@gmail.com</td><td><div class="flex justify-between"><span>21/09/2021<br>05:18:00 PM</span><div class="flex h-[19px] items-center gap-1 text-[#2d3338]"><svg class="mr-[10px] size-[14px] text-[#0f1658]"><use href="#check"/></svg><svg class="size-[12px]"><use href="#pencil"/></svg><svg class="size-3"><use href="#wave"/></svg><svg class="h-[11px] w-2"><use href="#help"/></svg></div></div></td></tr>
                <tr><td>70</td><td>00f4f3a0232992a84a3b5ff077fc7e81f3</td><td>Netsol Bussiness</td><td>Netsol Hardware</td><td>9904403246</td><td>palak@netsolitsolution.com</td><td><div class="flex justify-between"><span>20/09/2021<br>10:55:11 AM</span><div class="flex h-[19px] items-center gap-1 text-[#2d3338]"><svg class="mr-[10px] size-[14px] text-[#0f1658]"><use href="#check"/></svg><svg class="size-[12px]"><use href="#pencil"/></svg><svg class="size-3"><use href="#wave"/></svg><svg class="size-3"><use href="#mail"/></svg><svg class="h-[11px] w-2"><use href="#help"/></svg></div></div></td></tr>
                <tr><td colspan="7"><div class="flex h-[19px] items-center justify-end gap-1 text-[#2d3338]"><svg class="mr-[10px] size-[14px] text-[#0f1658]"><use href="#check"/></svg><svg class="size-[12px]"><use href="#pencil"/></svg><svg class="size-3"><use href="#wave"/></svg><svg class="h-[11px] w-2"><use href="#help"/></svg></div></td></tr>
              </tbody>
            </table>
          </section>
        </main>
      </div>

      <!-- Modal -->
      <div class="absolute inset-0 flex items-start bg-black/80 pl-[77px] pr-[92px] pt-[31px]">
        <div role="dialog" aria-modal="true" aria-labelledby="modal-title" class="flex-1 bg-white text-[#54656f] shadow-[0_0_1px_1px_rgba(0,0,0,0.3)]">
          <div class="flex h-[57px] justify-between border-b border-[#e5e5e5] bg-[#0f1658] px-[15px] text-white">
            <h2 id="modal-title" class="pt-[14px] text-[18px] leading-[27px]">Payment Types</h2>
            <button aria-label="Close dialog" class="mt-[19px] flex size-3 items-center justify-center"><svg class="size-3" viewBox="0 0 12 12"><path d="M2 2l8 8M10 2l-8 8" stroke="currentColor" stroke-width="3" stroke-linecap="round"/></svg></button>
          </div>
          <div class="px-[15px] pb-6 pt-[15px]">
            <div class="border border-[#edf1f5] pb-[53px] shadow-[0_0_10px_rgba(0,0,0,0.05)]">
              <div class="mx-auto max-w-[1140px]">
                <div role="tablist" class="flex h-[39px] gap-[2px] border-b border-[#dadada] bg-[#e9e9e9] text-[#3a414a] [&>button]:-mb-px [&>button]:border-x [&>button]:border-transparent [&>button]:px-[14px] [&>button]:pb-[2px]">
                  <button role="tab">Cash</button>
                  <button role="tab">PayuMoney</button>
                  <button role="tab">Instamojo</button>
                  <button role="tab">Ccavenue</button>
                  <button role="tab">Paypal</button>
                  <button role="tab">Razorpay</button>
                  <button role="tab" aria-selected="true" class="border-x-[#dadada]! bg-white px-[15px]! text-[#6b6b6b]">Stripe</button>
                </div>
                <form class="px-5 pt-[38px]" onsubmit="return false">
                  <h3 class="text-[24px] leading-[30px]">Stripe Payment</h3>
                  <div class="mt-[15px] flex h-[21px] gap-[9px]">
                    <input id="active" type="checkbox" class="size-[21px] appearance-none rounded-[1px] border border-[#c8c8c8]">
                    <label for="active" class="text-[12px] leading-[18px]">Active</label>
                  </div>
                  <label for="pk" class="mt-[7px] block leading-[19px]">publish key</label>
                  <input id="pk" type="text" class="block h-[30px] w-full border border-[#e4e7ea] px-2">
                  <label for="sk" class="block leading-[19px]">secret key</label>
                  <input id="sk" type="text" class="block h-[30px] w-full border border-[#0b3450] px-2 shadow-[0_0_8px_rgba(102,175,233,0.6)] outline-none">
                  <button type="submit" class="mt-[15px] h-8 w-[110px] rounded-[2px] bg-[#0f1658] text-white">Update</button>
                </form>
              </div>
            </div>
          </div>
          <div class="flex justify-end border-t border-[#e5e5e5] p-[15px]">
            <button class="h-[33px] w-[110px] rounded-[2px] bg-[#0f1658] pb-px text-white">Close</button>
          </div>
        </div>
      </div>
    </div>
  </div>
</div>
</body>
</html>
